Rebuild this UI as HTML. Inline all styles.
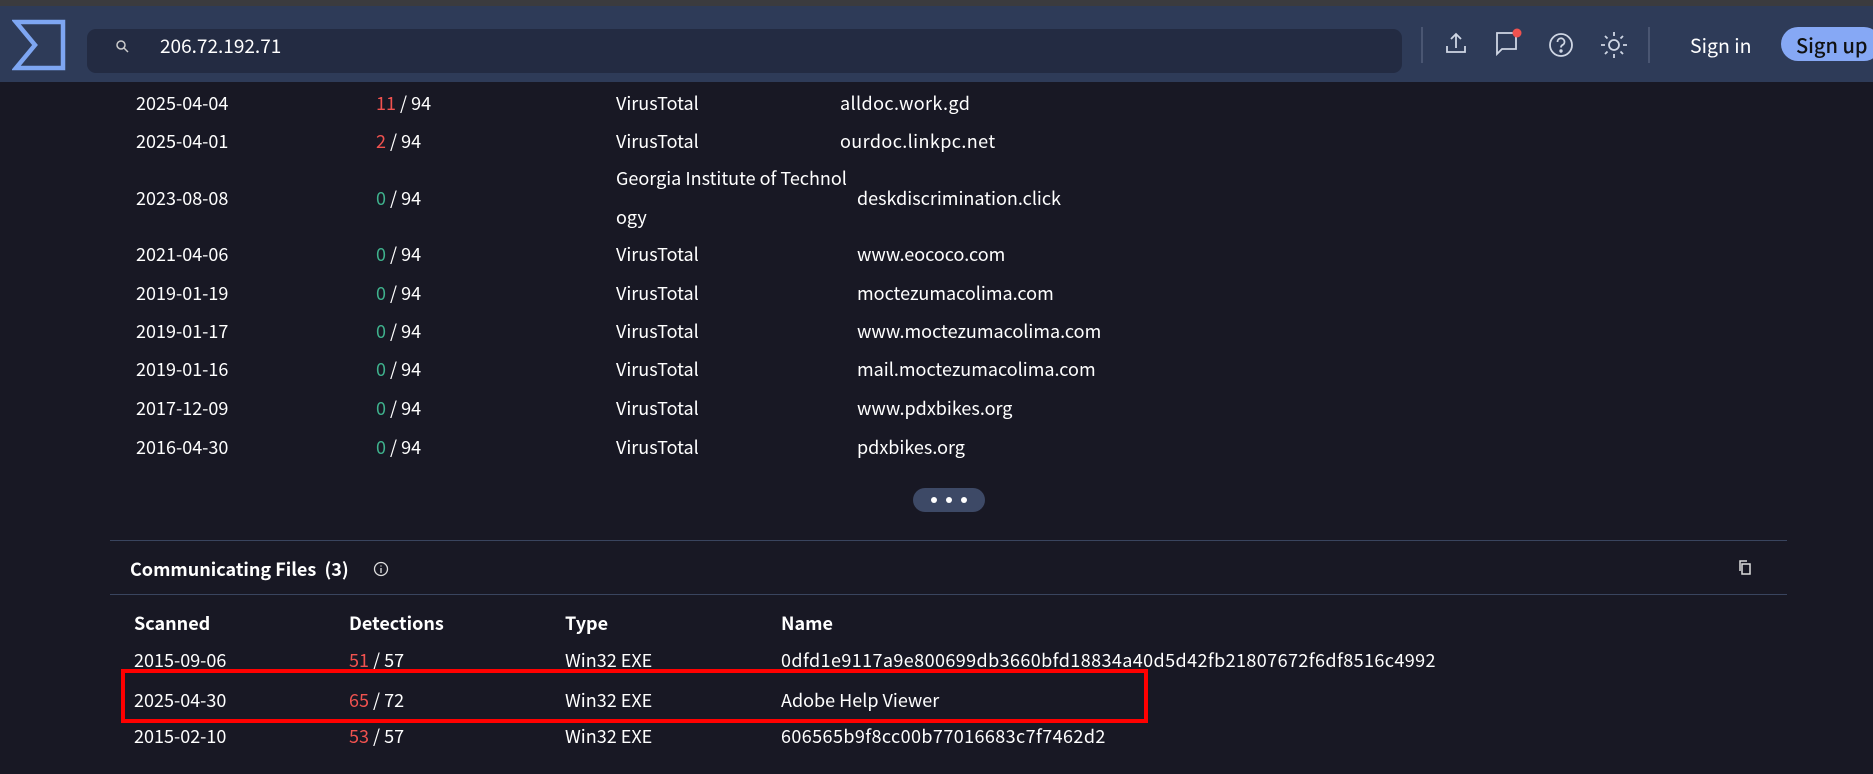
<!DOCTYPE html>
<html><head><meta charset="utf-8"><style>
*{margin:0;padding:0;box-sizing:border-box}
body{width:1873px;height:774px;background:#181824;font-family:"Noto Sans CJK SC","Liberation Sans",sans-serif;color:#fff;position:relative;overflow:hidden;font-size:18px}
.top{position:absolute;left:0;top:0;width:1873px;height:6px;background:#3b3b3e}
.hdr{position:absolute;left:0;top:6px;width:1873px;height:76px;background:#2e3b58}
.search{position:absolute;left:87px;top:23px;width:1315px;height:44px;background:#232b42;border-radius:9px}
.t{position:absolute;white-space:nowrap;line-height:20px}
.r{color:#f0524f}.g{color:#3fb28d}
.b{font-weight:bold}
.w{letter-spacing:0.4px}
.vl{position:absolute;width:2px;background:#4b5878}
</style></head><body>
<div class="top"></div>
<div class="hdr">
<svg style="position:absolute;left:12px;top:12px" width="54" height="54" viewBox="0 0 54 54"><path d="M4 4H51V50H4L23 27Z" fill="none" stroke="#7ea6f2" stroke-width="4.5"/></svg>
<div class="search"></div>
<svg style="position:absolute;left:115px;top:33px" width="14" height="14" viewBox="0 0 14 14"><circle cx="6" cy="6" r="4" fill="none" stroke="#ccc" stroke-width="1.5"/><path d="M9 9L13 13" stroke="#ccc" stroke-width="1.5"/></svg>
<div class="t" style="left:160px;top:30px;font-size:19px">206.72.192.71</div>
<div class="vl" style="left:1421px;top:21px;height:36px;background:#4a5672"></div>
<svg style="position:absolute;left:1444px;top:24px" width="24" height="26" viewBox="0 0 24 26" fill="none" stroke="#cfd6e4" stroke-width="1.8"><path d="M12 18V4M7 9L12 4L17 9M3 16V22H21V16"/></svg>
<svg style="position:absolute;left:1494px;top:22px" width="32" height="32" viewBox="0 0 32 32" fill="none" stroke="#cfd6e4" stroke-width="1.8"><path d="M3 5H22V21H8L3 26Z"/><circle cx="23" cy="5" r="4.5" fill="#f0524f" stroke="none"/></svg>
<svg style="position:absolute;left:1548px;top:26px" width="26" height="26" viewBox="0 0 26 26" fill="none" stroke="#cfd6e4" stroke-width="1.8"><circle cx="13" cy="13" r="11"/><path d="M9.5 10a3.5 3.5 0 1 1 5 3c-1.2.6-1.5 1.3-1.5 2.5"/><circle cx="13" cy="19" r=".8" fill="#cfd6e4"/></svg>
<svg style="position:absolute;left:1599px;top:24px" width="30" height="30" viewBox="0 0 30 30" fill="none" stroke="#cfd6e4" stroke-width="1.8"><circle cx="15" cy="15" r="5"/><path d="M15 2V6M15 24V28M2 15H6M24 15H28M6 6L8.5 8.5M21.5 21.5L24 24M6 24L8.5 21.5M21.5 8.5L24 6"/></svg>
<div class="vl" style="left:1648px;top:21px;height:36px;background:#4a5672"></div>
<div class="t" style="left:1690px;top:29px;font-size:19.5px">Sign in</div>
<div style="position:absolute;left:1781px;top:21px;width:100px;height:34px;border-radius:17px;background:#86a8f5"></div>
<div class="t" style="left:1796px;top:29px;font-size:20px;color:#111;font-weight:500">Sign up</div>
</div>

<div class="t" style="left:136px;top:93px">2025-04-04</div><div class="t" style="left:376px;top:93px"><span class="r">11</span> / 94</div><div class="t" style="left:616px;top:93px">VirusTotal</div><div class="t w" style="left:840px;top:93px">alldoc.work.gd</div>
<div class="t" style="left:136px;top:131px">2025-04-01</div><div class="t" style="left:376px;top:131px"><span class="r">2</span> / 94</div><div class="t" style="left:616px;top:131px">VirusTotal</div><div class="t w" style="left:840px;top:131px">ourdoc.linkpc.net</div>
<div class="t" style="left:136px;top:188px">2023-08-08</div><div class="t" style="left:376px;top:188px"><span class="g">0</span> / 94</div><div class="t" style="left:616px;top:168px">Georgia Institute of Technol</div><div class="t" style="left:616px;top:207px">ogy</div><div class="t" style="left:857px;top:188px">deskdiscrimination.click</div>
<div class="t" style="left:136px;top:244px">2021-04-06</div><div class="t" style="left:376px;top:244px"><span class="g">0</span> / 94</div><div class="t" style="left:616px;top:244px">VirusTotal</div><div class="t" style="left:857px;top:244px">www.eococo.com</div>
<div class="t" style="left:136px;top:283px">2019-01-19</div><div class="t" style="left:376px;top:283px"><span class="g">0</span> / 94</div><div class="t" style="left:616px;top:283px">VirusTotal</div><div class="t" style="left:857px;top:283px">moctezumacolima.com</div>
<div class="t" style="left:136px;top:321px">2019-01-17</div><div class="t" style="left:376px;top:321px"><span class="g">0</span> / 94</div><div class="t" style="left:616px;top:321px">VirusTotal</div><div class="t" style="left:857px;top:321px">www.moctezumacolima.com</div>
<div class="t" style="left:136px;top:359px">2019-01-16</div><div class="t" style="left:376px;top:359px"><span class="g">0</span> / 94</div><div class="t" style="left:616px;top:359px">VirusTotal</div><div class="t" style="left:857px;top:359px">mail.moctezumacolima.com</div>
<div class="t" style="left:136px;top:398px">2017-12-09</div><div class="t" style="left:376px;top:398px"><span class="g">0</span> / 94</div><div class="t" style="left:616px;top:398px">VirusTotal</div><div class="t" style="left:857px;top:398px">www.pdxbikes.org</div>
<div class="t" style="left:136px;top:437px">2016-04-30</div><div class="t" style="left:376px;top:437px"><span class="g">0</span> / 94</div><div class="t" style="left:616px;top:437px">VirusTotal</div><div class="t" style="left:857px;top:437px">pdxbikes.org</div>

<div style="position:absolute;left:913px;top:488px;width:72px;height:24px;border-radius:12px;background:#3d4966"></div>
<div style="position:absolute;left:931px;top:497px;width:6px;height:6px;border-radius:3px;background:#fff"></div>
<div style="position:absolute;left:946px;top:497px;width:6px;height:6px;border-radius:3px;background:#fff"></div>
<div style="position:absolute;left:961px;top:497px;width:6px;height:6px;border-radius:3px;background:#fff"></div>

<div style="position:absolute;left:110px;top:540px;width:1677px;height:1px;background:#39445e"></div>
<div class="t b" style="left:130px;top:559px">Communicating Files&nbsp; (3)</div>
<svg style="position:absolute;left:373px;top:561px" width="16" height="16" viewBox="0 0 16 16" fill="none" stroke="#ddd" stroke-width="1.3"><circle cx="8" cy="8" r="6.5"/><path d="M8 7V12M8 4.5V5.5"/></svg>
<svg style="position:absolute;left:1737px;top:559px" width="16" height="18" viewBox="0 0 16 18" fill="none" stroke="#ddd" stroke-width="1.5"><rect x="5" y="5" width="8" height="10"/><path d="M3 12V2H10"/></svg>
<div style="position:absolute;left:110px;top:594px;width:1677px;height:1px;background:#39445e"></div>

<div class="t b" style="left:134px;top:613px">Scanned</div><div class="t b" style="left:349px;top:613px">Detections</div><div class="t b" style="left:565px;top:613px">Type</div><div class="t b" style="left:781px;top:613px">Name</div>
<div class="t" style="left:134px;top:650px">2015-09-06</div><div class="t" style="left:349px;top:650px"><span class="r">51</span> / 57</div><div class="t" style="left:565px;top:650px">Win32 EXE</div><div class="t w" style="left:781px;top:650px">0dfd1e9117a9e800699db3660bfd18834a40d5d42fb21807672f6df8516c4992</div>
<div class="t" style="left:134px;top:690px">2025-04-30</div><div class="t" style="left:349px;top:690px"><span class="r">65</span> / 72</div><div class="t" style="left:565px;top:690px">Win32 EXE</div><div class="t" style="left:781px;top:690px">Adobe Help Viewer</div>
<div class="t" style="left:134px;top:726px">2015-02-10</div><div class="t" style="left:349px;top:726px"><span class="r">53</span> / 57</div><div class="t" style="left:565px;top:726px">Win32 EXE</div><div class="t w" style="left:781px;top:726px">606565b9f8cc00b77016683c7f7462d2</div>
<div style="position:absolute;left:121px;top:669px;width:1027px;height:54px;border:4px solid #f00"></div>
</body></html>
